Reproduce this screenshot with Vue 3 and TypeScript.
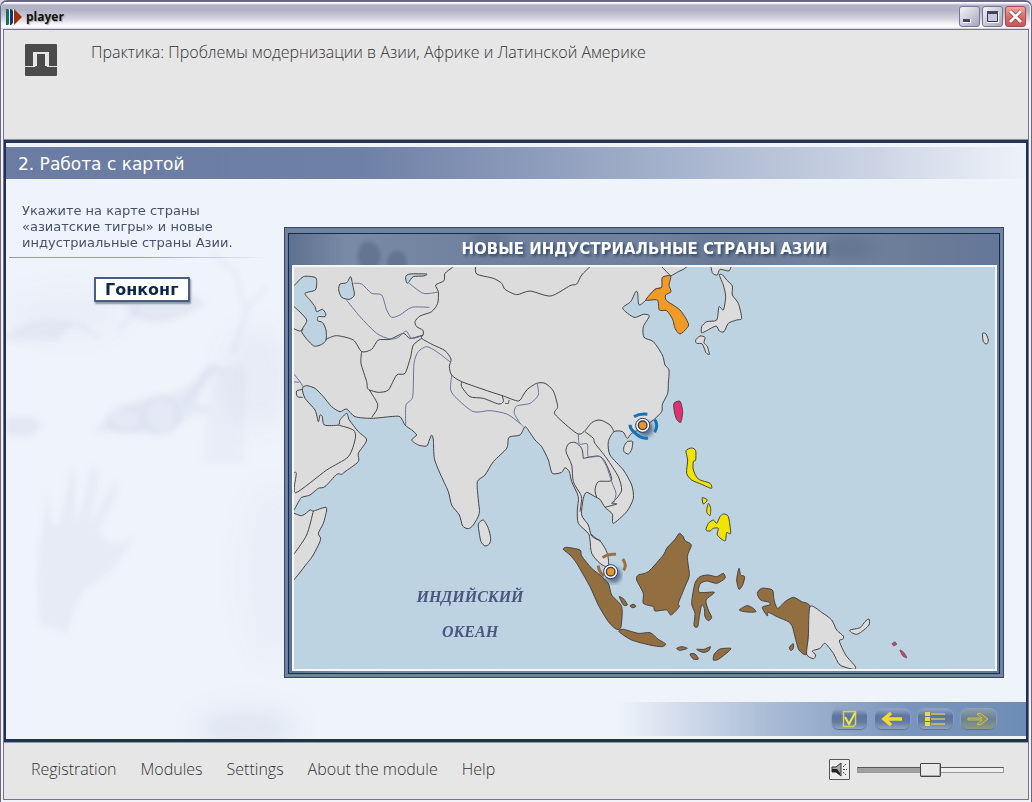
<script setup lang="ts">
import { ref } from 'vue'

type Pt = [number, number]
interface Shape { kind: string; at?: Pt; pts: string }

const parse = (s: string, at: Pt = [0, 0]): Pt[] =>
  s.trim().split(/\s+/).map((p) => {
    const [x, y] = p.split(',').map(Number)
    return [x + at[0], y + at[1]] as Pt
  })

// Rounds a list of points into a cubic spline passing through each of them
function spline(s: string, at: Pt | undefined, closed: boolean): string {
  const p = parse(s, at)
  const n = p.length
  const get = (i: number): Pt => (closed ? p[(i + n) % n] : p[Math.max(0, Math.min(n - 1, i))])
  let d = `M${p[0][0]} ${p[0][1]}`
  for (let i = 0; i < (closed ? n : n - 1); i++) {
    const [a, b, c, e] = [get(i - 1), get(i), get(i + 1), get(i + 2)]
    const k = 8
    d += `C${b[0] + (c[0] - a[0]) / k} ${b[1] + (c[1] - a[1]) / k} ${c[0] - (e[0] - b[0]) / k} ${c[1] - (e[1] - b[1]) / k} ${c[0]} ${c[1]}`
  }
  return closed ? d + 'Z' : d
}

const EAST: Pt = [690, 0]
const SOUTH: Pt = [690, 510]
const PAPUA: Pt = [1320, 840]

const areas: Shape[] = [
  { kind: 'land', pts: '-20,-20 1210,-20 1188,22 1165,35 1142,48 1127,52 1115,82 1095,88 1068,120 1047,135 1043,100 1037,95 1022,125 998,145 1032,172 1060,163 1078,168 1060,200 1062,232 1090,245 1117,285 1125,315 1137,330 1135,370 1133,400 1117,433 1115,455 1090,480 1055,505 1025,520 1012,535 998,515 972,515 955,545 960,585 1000,630 1025,675 1030,715 1010,755 970,790 967,762 945,742 930,718 915,710 890,697 880,715 875,765 895,795 905,828 932,845 952,880 955,920 930,910 905,880 900,840 895,820 865,790 862,750 865,710 845,665 838,635 825,623 815,637 787,640 775,600 755,560 735,540 718,515 705,500 690,525 657,532 650,565 610,605 585,645 562,665 565,720 568,760 550,795 535,806 518,798 508,765 485,735 475,695 450,640 433,595 430,540 425,525 418,540 410,558 385,555 365,540 380,525 365,510 345,495 330,470 300,470 245,475 195,470 170,447 150,455 125,440 100,410 75,385 50,377 37,385 45,415 75,450 85,485 90,465 97,470 103,495 145,495 150,480 170,460 178,480 205,515 230,540 205,580 205,605 165,635 155,643 140,643 105,680 85,685 60,705 35,712 -20,735' },
  { kind: 'land', pts: '-20,767 35,767 60,750 70,753 105,742 110,750 100,790 85,820 92,838 75,875 55,905 -20,980' },
  { kind: 'sea', pts: '-10,90 12,77 40,50 75,52 80,65 76,90 45,100 60,120 75,140 80,155 97,148 107,160 105,170 85,170 83,182 98,188 108,210 108,240 95,253 70,257 35,215 50,180 12,140 -10,130' },
  { kind: 'sea', pts: '182,50 188,75 193,105 178,118 155,112 146,90 150,72 170,68' },
  { kind: 'sea', pts: '350,68 347,50 360,42 410,42 400,48 370,50 355,68' },
  { kind: 'land', pts: '565,792 580,780 595,805 602,835 598,852 585,858 573,845 568,820' },
  { kind: 'land', pts: '2078,220 2088,222 2095,240 2090,252 2080,245' },
  { kind: 'land', at: EAST, pts: '312,560 322,545 338,545 335,568 325,582 312,575' },
  { kind: 'land', at: EAST, pts: '598,45 608,45 620,60 637,78 637,105 655,130 665,175 650,180 625,190 612,215 598,213 588,198 560,212 545,218 545,200 560,185 590,180 597,140 610,150 617,110 610,75' },
  { kind: 'land', at: EAST, pts: '575,0 577,38 592,45 600,28 628,32 632,0' },
  { kind: 'land', at: EAST, pts: '527,240 540,228 555,232 552,248 562,260 568,283 558,278 547,252 530,250' },
  { kind: 'korea', at: EAST, pts: '427,52 452,48 447,75 453,95 437,105 440,122 480,150 505,190 500,205 480,222 465,205 458,178 440,152 418,150 412,120 378,120 405,88 425,82' },
  { kind: 'taiwan', at: EAST, pts: '462,430 480,424 488,455 482,487 470,478 463,455' },
  { kind: 'phil', at: SOUTH, pts: '498,62 515,54 527,62 527,90 520,95 520,120 535,147 570,160 574,175 545,163 515,150 500,130 503,90' },
  { kind: 'phil', at: SOUTH, pts: '547,203 562,210 550,222' },
  { kind: 'phil', at: SOUTH, pts: '565,220 572,235 570,257 560,245' },
  { kind: 'phil', at: SOUTH, pts: '558,300 565,280 580,270 590,280 600,260 610,252 625,260 632,310 620,308 615,333 592,315 595,295 580,295 570,303' },
  { kind: 'indo', at: SOUTH, pts: '130,358 140,352 180,360 185,378 215,415 240,435 265,460 275,495 305,530 303,590 290,598 265,575 235,525 210,470 170,400 150,375' },
  { kind: 'indo', at: SOUTH, pts: '297,605 310,598 355,610 390,608 415,628 437,642 425,650 390,645 335,630' },
  { kind: 'indo', at: SOUTH, pts: '478,310 490,320 495,332 514,345 502,380 508,435 495,470 475,520 478,530 453,555 440,540 405,543 400,530 370,520 370,490 350,450 355,435 385,425 430,375 440,355 465,328' },
  { kind: 'indo', at: SOUTH, pts: '610,430 615,445 590,460 560,453 540,462 538,487 583,487 558,510 565,540 575,562 565,572 555,560 553,535 545,525 538,560 533,590 522,587 525,550 515,520 525,460 540,440 565,435 590,440' },
  { kind: 'indo', at: SOUTH, pts: '298,500 312,508 322,525 310,525' },
  { kind: 'indo', at: SOUTH, pts: '330,527 342,523 347,530 337,533' },
  { kind: 'indo', at: SOUTH, pts: '470,655 485,650 502,655 480,661' },
  { kind: 'indo', at: SOUTH, pts: '510,672 525,672 535,687 520,687' },
  { kind: 'indo', at: SOUTH, pts: '530,658 552,658 571,650 565,663 548,667' },
  { kind: 'indo', at: SOUTH, pts: '580,690 583,672 600,657 632,655 625,665 595,688' },
  { kind: 'indo', at: SOUTH, pts: '657,415 662,435 674,440 668,465 657,478 650,450' },
  { kind: 'indo', at: SOUTH, pts: '658,540 680,527 695,532 708,545 680,546' },
  { kind: 'indo', at: PAPUA, pts: '82,160 95,145 127,150 132,180 143,205 165,185 190,172 215,185 240,200 235,290 230,343 207,330 195,290 187,260 175,245 145,232 115,217 112,228 97,202 118,195 118,187 92,180' },
  { kind: 'indo', at: PAPUA, pts: '178,322 190,311 190,325 183,332' },
  { kind: 'land', at: PAPUA, pts: '240,200 275,217 305,240 320,270 340,288 338,298 328,303 347,345 375,378 372,388 330,375 310,340 285,310 270,325 247,333 257,345 250,356 230,343 235,290' },
  { kind: 'land', at: PAPUA, pts: '360,270 390,263 405,245 417,237 417,255 395,275 380,283 365,278' },
  { kind: 'isle', at: PAPUA, pts: '487,310 495,306 500,313 490,317' },
  { kind: 'isle', at: PAPUA, pts: '510,330 522,338 530,353 518,347' },
]

const lines: Shape[] = [
  { kind: 'border', pts: '488,22 465,40 462,62 437,75 445,95 443,130 425,155 390,168 375,185 380,200 398,210 400,222 395,235 430,255 465,272 483,297 478,320 485,345 515,365 600,395 640,408 685,423 700,405 712,388 740,370 765,370 790,393 803,440 795,463 860,520 882,515 905,488 930,480 960,495 972,515' },
  { kind: 'border', pts: '557,15 560,42 610,55 635,70 645,88 680,104 720,93 782,108 840,77 860,72 875,45 900,20' },
  { kind: 'border', pts: '515,365 515,380 540,410 580,415 625,432 640,425 637,408' },
  { kind: 'border', pts: '645,430 655,430 657,420' },
  { kind: 'border', pts: '108,238 140,227 190,240 215,275 245,268 265,240 300,238 340,220 360,235 400,225' },
  { kind: 'border', pts: '395,235 370,255 362,290 345,340 320,345 295,390 265,397 238,390' },
  { kind: 'border', pts: '215,275 213,310 230,365 232,385 238,390 262,430 260,450 245,472' },
  { kind: 'border', pts: '145,495 190,510 196,535 175,590 110,630 17,698 19,640 10,640' },
  { kind: 'border', pts: '38,388 20,393 22,410 38,412' },
  { kind: 'border', pts: '10,205 28,213 40,208' },
  { kind: 'border', pts: '70,753 50,825 10,885' },
  { kind: 'border', pts: '1115,20 1142,48' },
  { kind: 'border', pts: '880,595 875,565 855,547 835,552 828,575 845,615 850,665 870,700 875,715 870,755' },
  { kind: 'border', pts: '880,595 925,588 945,605 965,660 925,665 915,690 920,712' },
  { kind: 'border', pts: '885,515 910,535 915,550 950,595 985,650 995,690 980,715 965,730 980,732 945,742' },
  { kind: 'border', pts: '903,822 918,835 932,842' },
  { kind: 'river', pts: '190,70 215,72 245,100 275,105 290,150 305,172 330,165 365,142 418,142' },
  { kind: 'river', pts: '168,118 210,170 260,220 300,237 325,232 348,213 365,235 395,228' },
  { kind: 'river', pts: '355,68 400,100 445,96' },
  { kind: 'river', pts: '347,495 348,435 368,410 372,310 385,275 410,260 440,275 482,307' },
  { kind: 'river', pts: '485,345 482,390 500,415 550,455 600,452 650,462 690,490 700,500' },
  { kind: 'river', pts: '690,490 673,460 680,438 720,430 745,405 742,372' },
  { kind: 'river', pts: '10,340 30,365 40,382' },
  { kind: 'river', pts: '10,365 28,367' },
  { kind: 'river', pts: '865,522 868,552 892,552 895,590 930,590 950,620 965,665 978,700 970,732' },
]

const markers = [
  { id: 'hongkong', x: 1058, y: 496, arcs: ['M-26-26Q-8-36 14-33', 'M36-18Q48 0 36 21', 'M-38-2Q-38 10-26 20Q-6 42 16 38'] },
  { id: 'singapore', x: 962, y: 935, arcs: ['M-24-42Q-10-54 16-52', 'M36-38Q50-20 39-4', 'M-37-18Q-36 2-20 12'] },
]

const menu = ['Registration', 'Modules', 'Settings', 'About the module', 'Help']
const volume = ref(50)
</script>

<template>
  <div class="window">
    <header class="titlebar">
      <svg class="app-icon" width="18" height="18" viewBox="0 0 18 18" aria-hidden="true">
        <path d="M1 1h2l2 2v12l-2 2H1z" fill="#11715a" />
        <path d="M5 1h1l3 3v10l-3 3H5z" fill="#10377e" />
        <path d="M9 1l8 8-8 8z" fill="#9c3208" />
        <path d="M4.500 1v16M8.500 1v16" stroke="#fff" />
      </svg>
      <span class="app-name">player</span>
      <div class="win-buttons">
        <button class="win-btn" aria-label="Minimize">
          <svg width="19" height="19" viewBox="0 0 19 19"><path d="M3 12h8v4H3z" fill="#fff" /><path d="M3 12h7v3H3z" fill="#44445f" /></svg>
        </button>
        <button class="win-btn" aria-label="Maximize">
          <svg width="19" height="19" viewBox="0 0 19 19"><path d="M5 6h10v9H5z" fill="none" stroke="#fff" stroke-width="2" /><path d="M4.500 4.500h10v10h-10z" fill="#c8c8da" stroke="#33334d" /><path d="M4 4h11v3H4z" fill="#44445f" /></svg>
        </button>
        <button class="win-btn close" aria-label="Close">
          <svg width="19" height="19" viewBox="0 0 19 19"><path d="M4 4l11 11M15 4L4 15" stroke="#702331" stroke-width="4" /><path d="M4 4l11 11M15 4L4 15" stroke="#fff" stroke-width="3" /></svg>
        </button>
      </div>
    </header>

    <div class="frame">
      <section class="top">
        <svg class="logo" width="32" height="32" viewBox="0 0 32 32" aria-hidden="true">
          <rect width="32" height="32" rx="1" fill="#4b4b4b" />
          <path d="M0 22.500H10V9H22V22.500H32" fill="none" stroke="#e6e6e6" stroke-width="1" />
          <path d="M8 8h16v14h-4V10h-8v12H8z" fill="#e6e6e6" />
        </svg>
        <h1>Практика: Проблемы модернизации в Азии, Африке и Латинской Америке</h1>
      </section>

      <main class="slide">
        <svg class="backdrop" width="100%" height="100%" aria-hidden="true">
          <defs>
            <filter id="soft"><feGaussianBlur stdDeviation="3" /></filter>
            <filter id="softer" x="-50%" y="-50%" width="200%" height="200%"><feGaussianBlur stdDeviation="12" /></filter>
          </defs>
          <g fill="#8e9dc4" filter="url(#softer)">
            <ellipse cx="250" cy="235" rx="35" ry="50" opacity=".08" />
            <ellipse cx="60" cy="170" rx="60" ry="24" opacity=".05" />
            <ellipse cx="240" cy="585" rx="50" ry="18" opacity=".16" />
            <ellipse cx="265" cy="430" rx="30" ry="90" opacity=".05" />
          </g>
          <g fill="#8e9dc4" filter="url(#soft)">
            <path opacity=".09" d="M34 480C26 420 38 400 40 345Q44 385 52 384Q60 360 64 325Q72 325 68 385Q78 360 86 322Q98 324 82 382Q98 360 108 338Q120 340 92 388Q110 412 128 390Q116 425 82 444Q66 460 62 490Z" />
            <path opacity=".11" d="M88 288Q120 256 150 254Q180 252 205 222Q216 220 190 258Q220 270 186 272Q160 296 132 290Z" />
            <path opacity=".12" d="M0 274H30L36 284L24 294L0 292Z" />
            <path opacity=".12" d="M118 158Q145 138 185 150L200 160Q175 178 150 180Q124 178 118 158Z" />
            <path opacity=".06" d="M206 224H238V320H196Z" />
            <path opacity=".1" d="M0 190Q30 170 70 180L50 198H0Z" />
          </g>
          <g fill="none" stroke="#8f9cc6" stroke-width="3" opacity=".12" filter="url(#soft)">
            <circle cx="155" cy="272" r="18" />
            <ellipse cx="120" cy="276" rx="18" ry="12" />
            <path d="M178 262L205 222L220 230M70 180L95 196M112 190L132 164M205 110L230 130L240 170L226 210M238 168L260 145" />
          </g>
        </svg>

        <h2 class="slide-title">2. Работа с картой</h2>

        <div class="work">
          <aside class="task">
            <p>Укажите на карте страны «азиатские тигры» и новые индустриальные страны Азии.</p>
            <button class="chip">Гонконг</button>
          </aside>

          <section class="panel">
            <div class="panel-in">
              <h3>НОВЫЕ ИНДУСТРИАЛЬНЫЕ СТРАНЫ АЗИИ</h3>
              <svg class="map" viewBox="12 21 2103 1206" role="img" aria-label="Карта Азии">
                <defs><filter id="drop"><feGaussianBlur stdDeviation="6" /></filter></defs>
                <path v-for="(a, i) in areas" :key="'a' + i" :class="a.kind" :d="spline(a.pts, a.at, true)" />
                <path v-for="(l, i) in lines" :key="'l' + i" :class="l.kind" :d="spline(l.pts, l.at, false)" />
                <g v-for="m in markers" :key="m.id" :transform="`translate(${m.x} ${m.y})`">
                  <circle cx="8" cy="10" r="24" fill="#1d2f55" opacity=".6" filter="url(#drop)" />
                  <path v-for="(arc, i) in m.arcs" :key="i" class="arc" :class="m.id" :d="arc" />
                  <circle r="21" fill="#fff" stroke="#243a60" stroke-width="3" />
                  <circle r="13" fill="#e9962a" stroke="#333c52" stroke-width="4" />
                </g>
                <text x="540" y="1026">ИНДИЙСКИЙ</text>
                <text x="540" y="1131">ОКЕАН</text>
              </svg>
            </div>
          </section>
        </div>

        <nav class="tools">
          <button aria-label="Проверить">
            <svg width="35" height="20" viewBox="0 0 35 20"><path d="M11.500 2.500h12v13l-2 2h-10z" fill="none" stroke="#d8d548" stroke-width="1.500" /><path d="M13 8l4 7 6-11" fill="none" stroke="#f0eb3c" stroke-width="2" /></svg>
          </button>
          <button aria-label="Назад">
            <svg width="35" height="20" viewBox="0 0 35 20"><path d="M16 4L9 10l7 6M10 10h17" fill="none" stroke="#f2da2b" stroke-width="3.500" /></svg>
          </button>
          <button aria-label="Содержание">
            <svg width="35" height="20" viewBox="0 0 35 20"><path d="M7 3h5v4H7zM7 8h5v4H7zM7 13h5v4H7z" fill="#e9dc37" /><path d="M13 5h14M13 10h14M13 15h14" stroke="#cfc850" stroke-width="1.500" /></svg>
          </button>
          <button class="dim" aria-label="Вперёд">
            <svg width="35" height="20" viewBox="0 0 35 20"><path d="M7 9h14l-5-4 3-1 8 6-8 6-3-1 5-4H7z" fill="#8d9469" stroke="#cdbf42" /></svg>
          </button>
        </nav>
      </main>

      <footer class="bottom">
        <nav class="menu">
          <button v-for="m in menu" :key="m">{{ m }}</button>
        </nav>
        <button class="mute" aria-label="Sound">
          <svg width="17" height="17" viewBox="0 0 17 17"><path d="M1 6h4l5-4v13l-5-4H1z" fill="#aaa" stroke="#333" /><path d="M1 8h5l3 4v2l-4-3H1z" fill="#222" /><path d="M12 6l3-3M12 8.500h4M12 11l3 3" stroke="#444" stroke-dasharray="2 1" /></svg>
        </button>
        <input v-model="volume" class="volume" type="range" min="0" max="100" aria-label="Volume" />
      </footer>
    </div>
  </div>
</template>

<style>
body {
  margin: 0;
  background: #d9d8e6;
}
</style>

<style scoped>
* {
  box-sizing: border-box;
}
button {
  padding: 0;
  border: 0;
  background: none;
  font: inherit;
  color: inherit;
}
svg {
  display: block;
}
.window {
  display: flex;
  flex-direction: column;
  min-height: 100vh;
  padding: 0 1px 1px 0;
  border: 1px solid #6a6884;
  border-top-width: 2px;
  border-radius: 7px 7px 0 0;
  background: #f2f2f8;
}
.titlebar {
  display: flex;
  align-items: center;
  height: 27px;
  padding: 2px 4px 0;
  border-radius: 6px 6px 0 0;
  background: linear-gradient(#fff 0, #fff 1px, #b4b3c9 3px, #b2b2c7 8px, #d0d0de 16px, #fff 24px, #f4f4f8 26px, #bdbccb 27px);
}
.app-name {
  margin-left: 3px;
  font: bold 12px/18px 'Open Sans', sans-serif;
  color: #111;
  text-shadow: 1px 1px 1px #aaa;
}
.win-buttons {
  display: flex;
  gap: 2px;
  margin-left: auto;
}
.win-btn {
  width: 21px;
  height: 21px;
  border: 1px solid #77768f;
  border-radius: 3px;
  background: linear-gradient(135deg, #f4f4fa, #c5c5d8 60%, #a4a4bf);
}
.win-btn.close {
  border-color: #a04b55;
  background: linear-gradient(#f0a89c, #e26a66 50%, #cf545a);
}
.frame {
  flex: 1;
  display: flex;
  flex-direction: column;
  margin: 0 1px 1px 2px;
  border: 1px solid #77748b;
  background: #e6e6e6;
}
.top {
  display: flex;
  gap: 34px;
  height: 110px;
  padding: 14px 21px;
  border-bottom: 1px solid #8d8d92;
}
.logo {
  flex: none;
}
h1 {
  margin: 0;
  font: 300 16px/16px 'Open Sans', 'Noto Sans', sans-serif;
  color: #333;
}
.slide {
  position: relative;
  flex: 1;
  display: flex;
  flex-direction: column;
  padding: 4px 0 3px;
  border: 2px solid #1f3058;
  border-top: 3px solid #26365a;
  border-bottom-width: 3px;
  background: linear-gradient(90deg, #eff3fb, #eff4fa);
}
.backdrop {
  position: absolute;
  inset: 0;
}
.slide-title {
  position: relative;
  margin: 0;
  padding: 3px 12px 0;
  font: 17px/29px 'DejaVu Sans', sans-serif;
  color: #fff;
  background: linear-gradient(90deg, #6a7ca3, #6f80a6 35%, #a5b2cc 65%, #ccd4e4 85%, #eef2f9);
}
.work {
  position: relative;
  flex: 1;
  display: flex;
}
.task {
  flex: none;
  display: flex;
  flex-direction: column;
  align-items: flex-start;
  width: 278px;
  padding: 24px 19px 0 3px;
}
.task p {
  width: 256px;
  margin: 0 0 19px;
  padding: 0 24px 6px 13px;
  border-bottom: 1px solid;
  border-image: linear-gradient(90deg, #8f9bc0, #8f9bc0 50%, transparent) 1;
  font: 13px/16px 'DejaVu Sans', sans-serif;
  color: #46526b;
}
.chip {
  margin-left: 85px;
  padding: 1px 9px 0;
  border: 2px solid #48607e;
  border-radius: 1px;
  background: #fff;
  box-shadow: 1px 2px 2px #8a93a5;
  font: bold 16px/20px 'DejaVu Sans', sans-serif;
  color: #0f2749;
}
.panel {
  flex: 1;
  align-self: flex-start;
  margin: 48px 22px 24px 0;
  padding: 5px 3px 3px;
  border: 1px solid #2f4a6f;
  background: #70829e;
}
.panel-in {
  padding: 0 2px 2px 3px;
  border: 1px solid #102c53;
  background:
    radial-gradient(ellipse 14px 18px at 80px 22px, #64758f 60%, transparent),
    radial-gradient(ellipse 12px 14px at 108px 28px, #64758f 60%, transparent),
    radial-gradient(ellipse 24px 20px at 200px 8px, #667793 40%, transparent),
    radial-gradient(ellipse 40px 20px at 560px 14px, #667793 30%, transparent),
    linear-gradient(90deg, #5f7190, #788aa5 8%, #6f819c 28%, #71829e 50%, #687a94 60%, #7384a0 75%, #6a7b97 90%, #65779a);
}
h3 {
  margin: 0;
  font: bold 15px/31px 'DejaVu Sans', sans-serif;
  text-align: center;
  color: #fff;
  text-shadow: 2px 2px 3px #34496c;
}
.map {
  width: 100%;
  border: 2px solid #f5f9fc;
  background: #bdd3e1;
}
.map path {
  stroke: #444;
  stroke-width: 3;
  stroke-linejoin: round;
}
.map .land { fill: #dcdcdc; }
.map .sea { fill: #bdd3e1; }
.map .korea { fill: #f19a25; }
.map .taiwan { fill: #e62e6f; }
.map .phil { fill: #f0e400; }
.map .indo { fill: #926e40; }
.map .isle {
  fill: #c2486c;
  stroke: #7d4a5c;
}
.map .border { fill: none; }
.map .river {
  fill: none;
  stroke: #6c7399;
}
.map .arc {
  fill: none;
  stroke: #0f74ba;
  stroke-width: 9;
}
.map .arc.singapore {
  stroke: #9a7044;
}
.map text {
  font: italic bold 48px 'Liberation Serif', serif;
  text-anchor: middle;
  fill: #4b5680;
}
.tools {
  position: relative;
  display: flex;
  justify-content: flex-end;
  align-items: center;
  gap: 8px;
  height: 34px;
  padding-right: 30px;
  background: linear-gradient(90deg, transparent 60%, #a9bbd5 75%, #7b96bd 88%, #6d8cb5);
}
.tools button {
  border-radius: 7px;
  background: linear-gradient(#93a5c5, #5c74a2 35%, #627aa6 65%, #93a4b8);
  box-shadow: 0 1px 1px #5b7092, 0 0 1px 1px #8fa2c2;
}
.tools .dim {
  background: linear-gradient(#8b9dac, #6b8094 50%, #8d9a83);
}
.bottom {
  display: flex;
  align-items: center;
  height: 57px;
  padding: 0 24px 3px 27px;
  border-top: 1px solid #9a9aa2;
}
.menu {
  display: flex;
  gap: 24px;
  margin-right: auto;
  padding-bottom: 2px;
  font: 300 16px/20px 'Open Sans', 'Noto Sans', sans-serif;
  color: #333;
}
.mute {
  display: grid;
  place-items: center;
  width: 21px;
  height: 21px;
  margin-right: 7px;
  border: 1px solid #555;
  border-radius: 1px;
  background: #ededed;
}
.volume {
  appearance: none;
  width: 147px;
  height: 21px;
  margin: 0;
  background: transparent;
}
.volume::-webkit-slider-runnable-track {
  height: 6px;
  border: 1px solid #999;
  border-top-color: #555;
  background: linear-gradient(90deg, #a0a0a0 50%, #efefef 50%);
}
.volume::-webkit-slider-thumb {
  appearance: none;
  width: 21px;
  height: 14px;
  margin-top: -5px;
  border: 1px solid #444;
  border-radius: 1px;
  background: #e9e9e9;
  box-shadow: inset -1px -1px #aaa;
}
</style>
